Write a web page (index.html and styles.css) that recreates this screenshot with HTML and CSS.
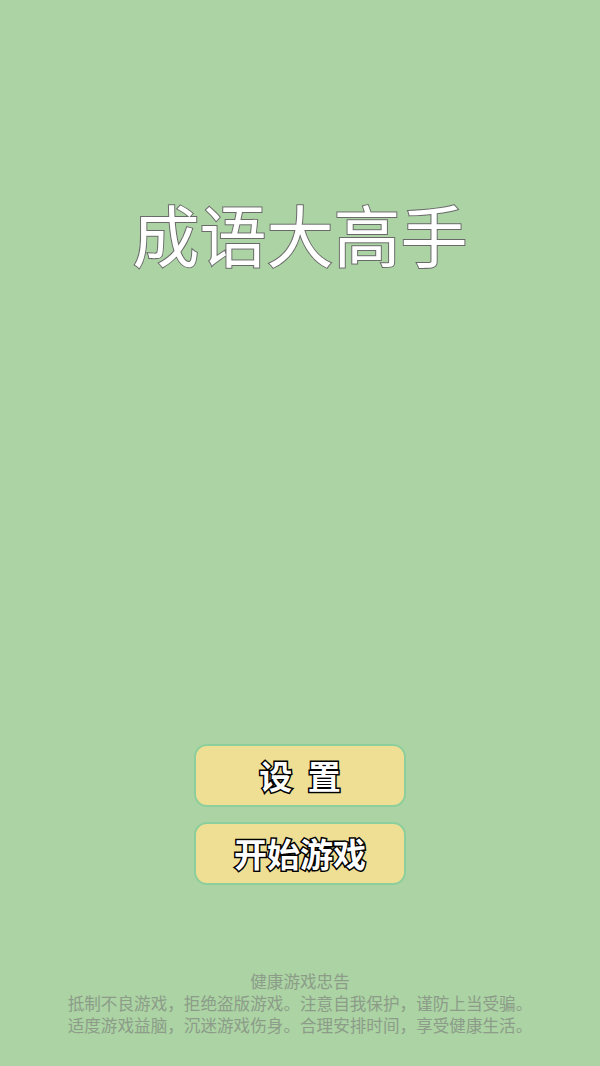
FILE: index.html
```html
<!DOCTYPE html>
<html lang="zh">
<head>
<meta charset="utf-8">
<link rel="stylesheet" href="styles.css">
</head>
<body>
<div class="screen">
  <h1 class="title">成语大高手</h1>
  <div class="buttons">
    <button class="btn btn-spaced">设 置</button>
    <button class="btn">开始游戏</button>
  </div>
  <div class="notice">
    <p>健康游戏忠告</p>
    <p>抵制不良游戏，拒绝盗版游戏。注意自我保护，谨防上当受骗。</p>
    <p>适度游戏益脑，沉迷游戏伤身。合理安排时间，享受健康生活。</p>
  </div>
</div>
</body>
</html>
```
FILE: styles.css
```css
html, body {
  margin: 0;
  padding: 0;
}
body {
  background: #abd3a3;
  font-family: "Noto Sans CJK SC", "Noto Sans", sans-serif;
}
.screen {
  width: 600px;
  height: 1066px;
  display: flex;
  flex-direction: column;
  align-items: center;
}
.title {
  margin: 189px 0 0 0;
  font-size: 67px;
  line-height: 88px;
  font-weight: 400;
  color: #ffffff;
  -webkit-text-stroke: 2px #6a6a6a;
  paint-order: stroke fill;
  letter-spacing: 0;
}
.buttons {
  margin-top: 467px;
  display: flex;
  flex-direction: column;
  gap: 15px;
}
.btn {
  width: 212px;
  height: 63px;
  border: 2px solid #8dcf9c;
  border-radius: 13px;
  background: #efdf94;
  font-family: "Noto Sans CJK SC", sans-serif;
  font-size: 33px;
  font-weight: 700;
  color: #ffffff;
  -webkit-text-stroke: 3px #000;
  paint-order: stroke fill;
  padding: 0;
  line-height: 1;
}
.btn-spaced {
  word-spacing: 8px;
}
.notice {
  margin-top: 85px;
  text-align: center;
  color: #8c9c89;
  font-size: 16.6px;
  line-height: 22px;
}
.notice p {
  margin: 0;
}
```
